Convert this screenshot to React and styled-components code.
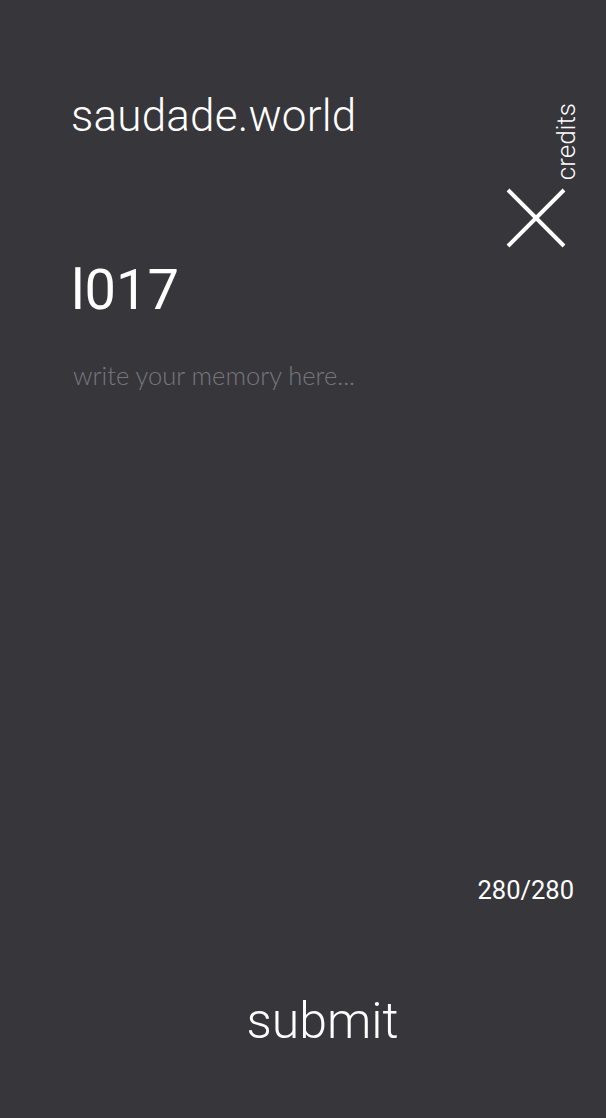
import React, { useState } from 'react';
import styled, { createGlobalStyle } from 'styled-components';

const Global = createGlobalStyle`
  html, body { margin: 0; padding: 0; background: #37363b; }
  * { box-sizing: border-box; }
`;

const Page = styled.div`
  width: 606px;
  height: 1118px;
  background: #37363b;
  color: #fff;
  font-family: Roboto, "Liberation Sans", sans-serif;
  display: flex;
  flex-direction: column;
  padding: 86px 32px 0 71px;
`;

const Header = styled.div`
  display: flex;
  justify-content: space-between;
  align-items: flex-start;
`;

const Title = styled.h1`
  margin: 0;
  font-weight: 300;
  font-size: 44px;
  line-height: 60px;
  letter-spacing: 0.2px;
`;

const Credits = styled.div`
  display: flex;
  align-items: flex-end;
  margin-top: 17px;
`;

const CloseButton = styled.button`
  background: none;
  border: none;
  padding: 0;
  width: 60px;
  height: 60px;
  display: flex;
  cursor: pointer;
`;

const CreditsLabel = styled.span`
  writing-mode: vertical-rl;
  transform: rotate(180deg);
  font-weight: 300;
  font-size: 26px;
  line-height: 20px;
  margin-bottom: 68px;
  margin-left: -10px;
  margin-right: -2px;
`;

const Code = styled.div`
  font-size: 56px;
  font-weight: 400;
  line-height: 60px;
  margin-top: 12px;
`;

const Memory = styled.textarea`
  margin-top: 40px;
  margin-left: 2px;
  flex: 1;
  background: transparent;
  border: none;
  outline: none;
  resize: none;
  color: #fff;
  font-family: Lato, "Open Sans", sans-serif;
  font-weight: 300;
  font-size: 25.5px;
  padding: 0;
  &::placeholder { color: #77767b; }
`;

const Counter = styled.div`
  align-self: flex-end;
  font-size: 25.5px;
  margin-bottom: 86px;
`;

const Submit = styled.button`
  align-self: center;
  margin: 0 0 67px 0;
  background: none;
  border: none;
  padding: 0;
  color: #fff;
  font-family: Roboto, "Liberation Sans", sans-serif;
  font-weight: 300;
  font-size: 50px;
  line-height: 60px;
  cursor: pointer;
`;

export default function App() {
  const [text, setText] = useState('');
  return (
    <>
      <Global />
      <Page>
        <Header>
          <Title>saudade.world</Title>
          <Credits>
            <CloseButton aria-label="close">
              <svg width="60" height="60" viewBox="0 0 60 60">
                <path d="M2 2 L58 58 M58 2 L2 58" stroke="#fff" strokeWidth="4" fill="none" />
              </svg>
            </CloseButton>
            <CreditsLabel>credits</CreditsLabel>
          </Credits>
        </Header>
        <Code>l017</Code>
        <Memory
          placeholder="write your memory here..."
          value={text}
          maxLength={280}
          onChange={e => setText(e.target.value)}
        />
        <Counter>{280 - text.length}/280</Counter>
        <Submit>submit</Submit>
      </Page>
    </>
  );
}
